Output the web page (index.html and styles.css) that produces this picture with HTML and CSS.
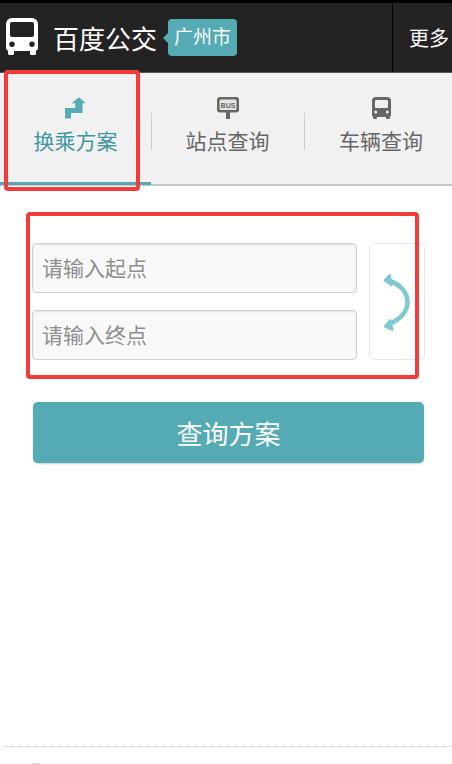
FILE: index.html
```html
<!DOCTYPE html>
<html lang="zh-CN">
<head>
  <meta charset="UTF-8" />
  <title>百度公交</title>
  <link rel="stylesheet" href="styles.css">
</head>
<body>

  <header class="topbar">
    <svg class="logo" width="32" height="37" viewBox="0 0 32 37">
      <path fill="#fff" fill-rule="evenodd" d="M6 0h20a6 6 0 0 1 6 6v24a3 3 0 0 1-2 2.800V35.500A1.500 1.500 0 0 1 28.500 37h-3A1.500 1.500 0 0 1 24 35.500V33H8v2.500A1.500 1.500 0 0 1 6.500 37h-3A1.500 1.500 0 0 1 2 35.500V32.800A3 3 0 0 1 0 30V6a6 6 0 0 1 6-6zM6 4a2 2 0 0 0-2 2v11a2 2 0 0 0 2 2h20a2 2 0 0 0 2-2V6a2 2 0 0 0-2-2zM6 23.600a2.700 2.700 0 1 0 0 5.400 2.700 2.700 0 0 0 0-5.400zm20 0a2.700 2.700 0 1 0 0 5.400 2.700 2.700 0 0 0 0-5.400z"/>
    </svg>
    <span class="brand">百度公交</span>
    <span class="city">广州市</span>
    <span class="more">更多</span>
  </header>

  <nav class="tabs">
    <div class="tab active">
      <svg width="21" height="22" viewBox="0 0 20 21">
        <path fill="#54abb4" d="M0 20.500V10.500h9.700V6H6.300l7-5.700 6.500 5.700h-3.100v9.300h-11v5.200z"/>
      </svg>
      <span>换乘方案</span>
    </div>
    <div class="tab">
      <svg width="22" height="22" viewBox="0 0 22 22">
        <path fill="#666" d="M3 0h16a3 3 0 0 1 3 3v9.500a3 3 0 0 1-3 3h-6V22H9v-6.500H3a3 3 0 0 1-3-3V3a3 3 0 0 1 3-3z"/>
        <rect x="2.500" y="2.500" width="17" height="10.500" rx="1.500" fill="#e4e4e4"/>
        <text x="11" y="10.700" class="bus-text">BUS</text>
      </svg>
      <span>站点查询</span>
    </div>
    <div class="tab tab-last">
      <svg width="19" height="22" viewBox="0 0 19 22">
        <path fill="#666" fill-rule="evenodd" d="M4 0h11a4 4 0 0 1 4 4v14a2 2 0 0 1-1 1.700V21a1 1 0 0 1-1 1h-2a1 1 0 0 1-1-1v-1H5v1a1 1 0 0 1-1 1H2a1 1 0 0 1-1-1v-1.300A2 2 0 0 1 0 18V4a4 4 0 0 1 4-4zM4 3a1 1 0 0 0-1 1v6a1 1 0 0 0 1 1h11a1 1 0 0 0 1-1V4a1 1 0 0 0-1-1zM3.700 13.500a1.500 1.500 0 1 0 0 3 1.500 1.500 0 0 0 0-3zm11.600 0a1.500 1.500 0 1 0 0 3 1.500 1.500 0 0 0 0-3z"/>
      </svg>
      <span>车辆查询</span>
    </div>
  </nav>

  <main class="search">
    <div class="route">
      <div class="fields">
        <div class="field">请输入起点</div>
        <div class="field">请输入终点</div>
      </div>
      <div class="swap">
        <svg width="30" height="60" viewBox="0 0 30 60">
          <path fill="none" stroke="#7ccbd0" stroke-width="4.500" d="M7 8.500C20 13 25.500 22 25.500 30S20 47 7 52"/>
          <path fill="#7ccbd0" stroke="#7ccbd0" stroke-width="2" stroke-linejoin="round" d="M2.500 8.500l5.300-5.500 1.900 10.500zM2.800 54.500l5.500-6.500 2.200 10z"/>
        </svg>
      </div>
    </div>
    <button class="go">查询方案</button>
  </main>

  <footer class="foot"><span class="foot-icon"></span></footer>

  <div class="mark mark-tab"></div>
  <div class="mark mark-form"></div>

</body>
</html>
```

FILE: styles.css
```css
* {
  box-sizing: border-box;
}
html, body {
  height: 100%;
}
body {
  margin: 0;
  overflow: hidden;
  background-color: #fff;
  font-family: "Roboto", "Noto Sans CJK SC", sans-serif;
  color: #666;
}

.topbar {
  display: flex;
  align-items: center;
  height: 73px;
  border-top: 3px solid #000;
  border-bottom: 1px solid #555;
  background-color: #232323;
  color: #fff;
}
.logo {
  margin: 0 0 3px 6px;
}
.brand {
  margin-left: 15px;
  font-size: 26px;
}
.city {
  position: relative;
  margin-left: 11px;
  padding: 0 6px;
  border-radius: 4px;
  background-color: #54abb4;
  font-size: 19px;
  line-height: 37px;
}
.city::before {
  content: "";
  position: absolute;
  left: -5px;
  top: 14px;
  border: 5px solid transparent;
  border-left: 0;
  border-right-color: #54abb4;
}
.more {
  display: flex;
  align-items: center;
  align-self: stretch;
  margin-left: auto;
  width: 60px;
  padding-left: 16px;
  border-left: 1px solid #000;
  font-size: 20px;
  white-space: nowrap;
}

.tabs {
  display: grid;
  grid-template-columns: 151px 153px 148px;
  height: 113px;
  border-bottom: 2px solid #c6c6c6;
  background-color: #f1f1f1;
}
.tab {
  position: relative;
  display: flex;
  flex-direction: column;
  align-items: center;
  padding-top: 24px;
  font-size: 21px;
}
.tab svg {
  height: 22px;
  margin-bottom: 8px;
}
.tab span {
  line-height: 30px;
}
.tab + .tab::before {
  content: "";
  position: absolute;
  left: 0;
  top: 40px;
  height: 37px;
  border-left: 1px solid #ccc;
}
.tab-last {
  padding-left: 6px;
}
.tab.active {
  border-bottom: 3px solid #54abb4;
  margin-bottom: -1px;
  color: #3f97a1;
}
.bus-text {
  font-family: "Liberation Sans", sans-serif;
  font-size: 7px;
  font-weight: 700;
  fill: #666;
  text-anchor: middle;
}

.search {
  padding: 57px 27px 0 32px;
}
.route {
  display: flex;
  gap: 12px;
}
.fields {
  display: flex;
  flex-direction: column;
  gap: 17px;
  width: 325px;
}
.field {
  height: 50px;
  padding-left: 9px;
  border: 1px solid #d0d0d0;
  border-radius: 4px;
  background-color: #f8f8f8;
  box-shadow: inset 0 1px 2px rgba(0, 0, 0, 0.1);
  color: #8e8e8e;
  font-size: 21px;
  line-height: 50px;
}
.swap {
  display: flex;
  align-items: center;
  justify-content: center;
  width: 56px;
  height: 117px;
  border: 1px solid #e6e6e6;
  border-radius: 5px;
}
.go {
  display: block;
  width: 391px;
  height: 61px;
  margin: 42px 0 0 1px;
  border: 0;
  border-radius: 5px;
  background-color: #54abb4;
  box-shadow: 0 1px 2px rgba(0, 0, 0, 0.2);
  color: #fff;
  font-family: inherit;
  font-size: 26px;
}

.foot {
  position: absolute;
  left: 4px;
  right: 0;
  top: 746px;
  border-top: 1px dotted #ccc;
}
.foot-icon {
  position: absolute;
  left: 29px;
  top: 16px;
  width: 7px;
  height: 2px;
  background-color: #ddd;
}

/* red annotation boxes drawn over the screenshot */
.mark {
  position: absolute;
  border: 4px solid #f23c3c;
  border-radius: 4px;
}
.mark-tab {
  left: 4px;
  top: 70px;
  width: 136px;
  height: 121px;
}
.mark-form {
  left: 26px;
  top: 212px;
  width: 393px;
  height: 167px;
}
```
